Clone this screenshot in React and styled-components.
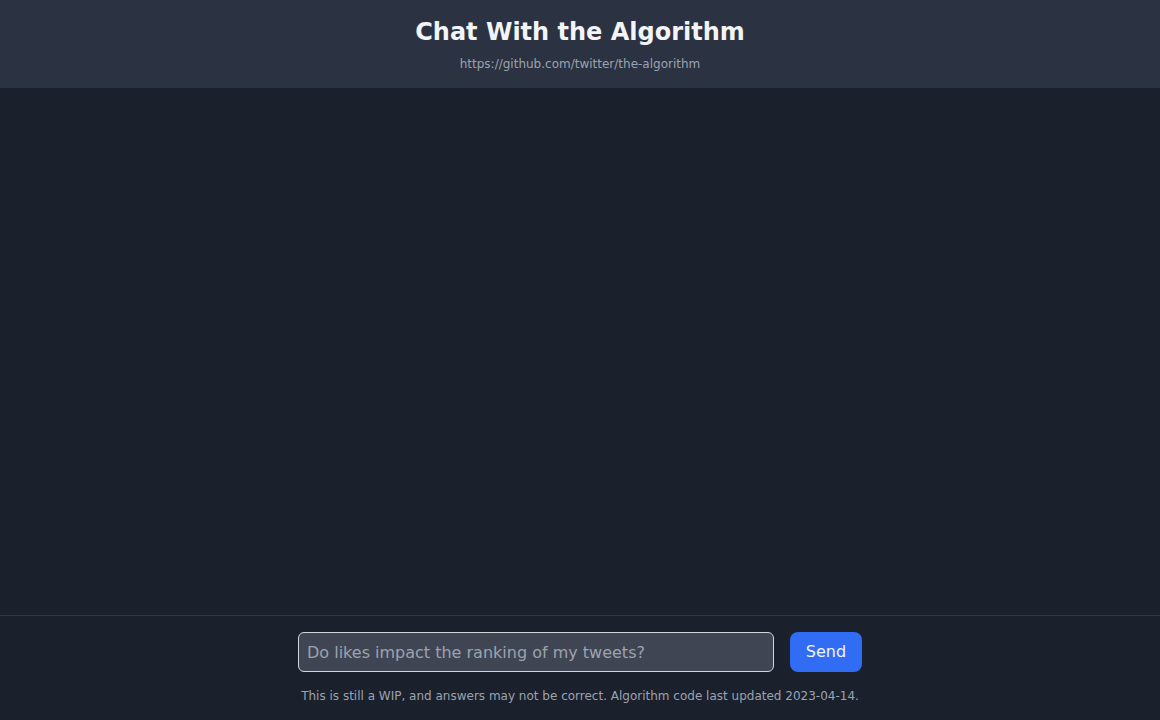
import React from "react";
import styled, { createGlobalStyle } from "styled-components";

const GlobalStyle = createGlobalStyle`
  html, body {
    margin: 0;
    padding: 0;
    background: #1a202c;
    font-family: "DejaVu Sans", sans-serif;
  }
  * { box-sizing: border-box; }
`;

function App() {
  return (
    <>
      <GlobalStyle />
      <Page>
        <Header>
          <Title>Chat With the Algorithm</Title>
          <RepoLink href="#">https://github.com/twitter/the-algorithm</RepoLink>
        </Header>
        <Messages />
        <Footer>
          <InputRow>
            <QuestionInput placeholder="Do likes impact the ranking of my tweets?" />
            <SendButton>Send</SendButton>
          </InputRow>
          <Disclaimer>
            This is still a WIP, and answers may not be correct. Algorithm code
            last updated 2023-04-14.
          </Disclaimer>
        </Footer>
      </Page>
    </>
  );
}

const Page = styled.div`
  height: 100vh;
  display: flex;
  flex-direction: column;
  background: #1a202c;
`;

const Header = styled.header`
  height: 88px;
  background: #2b3242;
  display: flex;
  flex-direction: column;
  align-items: center;
  padding-top: 16px;
`;

const Title = styled.h1`
  margin: 0;
  font-size: 24px;
  line-height: 32px;
  font-weight: 700;
  color: #f3f4f6;
`;

const RepoLink = styled.a`
  margin-top: 8px;
  font-size: 12px;
  line-height: 16px;
  color: #9ca3af;
  text-decoration: none;
`;

const Messages = styled.main`
  flex: 1;
`;

const Footer = styled.footer`
  border-top: 1px solid #2d3748;
  padding: 16px 0 16px;
  display: flex;
  flex-direction: column;
  align-items: center;
`;

const InputRow = styled.div`
  display: flex;
  gap: 16px;
`;

const QuestionInput = styled.input`
  width: 476px;
  height: 40px;
  padding: 0 8px;
  border: 1px solid #d1d5db;
  border-radius: 6px;
  background: #404553;
  color: #e5e7eb;
  font-family: "DejaVu Sans", sans-serif;
  font-size: 16px;
  outline: none;

  &::placeholder {
    color: #9ca3af;
  }
`;

const SendButton = styled.button`
  width: 72px;
  height: 40px;
  border: none;
  border-radius: 8px;
  padding: 0 0 1px;
  background: #316cf4;
  color: #f3f4f6;
  font-family: "DejaVu Sans", sans-serif;
  font-size: 16px;
  line-height: 24px;
  cursor: pointer;
`;

const Disclaimer = styled.p`
  margin: 16px 0 0;
  font-size: 12px;
  line-height: 16px;
  color: #9ca3af;
`;

export default App;
